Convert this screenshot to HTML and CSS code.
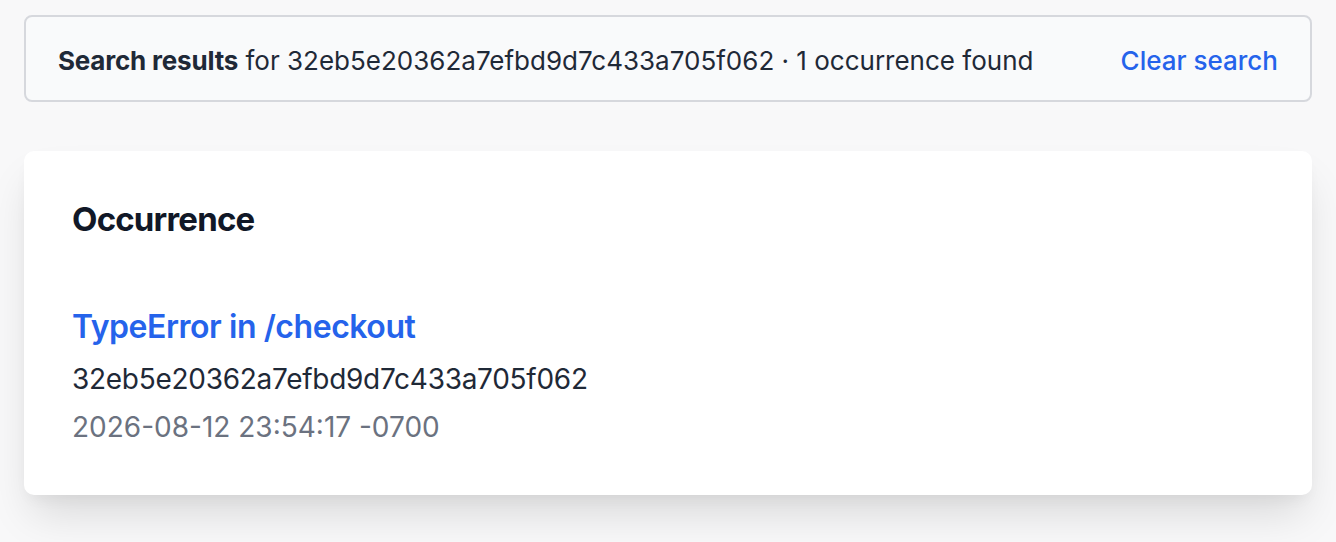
FILE: index.html
```html
<!DOCTYPE html>
<html lang="en">
<head>
<meta charset="utf-8">
<title>Search results</title>
<link rel="stylesheet" href="styles.css">
</head>
<body>
<main class="page">
  <div class="banner">
    <p class="banner-text"><strong>Search results</strong> for 32eb5e20362a7efbd9d7c433a705f062 · 1 occurrence found</p>
    <a class="banner-link" href="#">Clear search</a>
  </div>
  <section class="card">
    <h2 class="card-title">Occurrence</h2>
    <div class="occurrence">
      <a class="occ-title" href="#">TypeError in /checkout</a>
      <div class="occ-id">32eb5e20362a7efbd9d7c433a705f062</div>
      <div class="occ-date">2026-08-12 23:54:17 -0700</div>
    </div>
  </section>
</main>
</body>
</html>
```

FILE: styles.css
```css
* { box-sizing: border-box; }
html, body {
  margin: 0;
  padding: 0;
  background: #f8f8f9;
  font-family: Inter, "Noto Sans", "Liberation Sans", sans-serif;
}
body { min-height: 100vh; }
.page {
  padding: 15px 24px 64px;
  display: flex;
  flex-direction: column;
  gap: 49px;
}
.banner {
  display: flex;
  align-items: center;
  justify-content: space-between;
  gap: 24px;
  background: #f9fafb;
  border: 2px solid #d6d8dd;
  border-radius: 8px;
  padding: 24px 32px 19px;
}
.banner-text {
  margin: 0;
  font-size: 26px;
  line-height: 40px;
  color: #1f2937;
  white-space: nowrap;
}
.banner-text strong { font-weight: 700; letter-spacing: -0.2px; }
.banner-link {
  font-size: 26px;
  line-height: 40px;
  font-weight: 500;
  color: #2563eb;
  text-decoration: none;
  white-space: nowrap;
}
.card {
  background: #ffffff;
  border-radius: 10px;
  padding: 48px;
  box-shadow: 0 26px 44px -8px rgba(0, 0, 0, 0.13), 0 8px 16px -6px rgba(0, 0, 0, 0.06);
}
.card-title {
  margin: 0 0 64px;
  font-size: 33px;
  line-height: 40px;
  font-weight: 700;
  letter-spacing: -0.8px;
  color: #111827;
}
.occurrence {
  display: flex;
  flex-direction: column;
  gap: 8px;
}
.occ-title {
  font-size: 32px;
  line-height: 48px;
  font-weight: 600;
  letter-spacing: -0.45px;
  color: #2563eb;
  text-decoration: none;
}
.occ-id {
  font-size: 28px;
  line-height: 40px;
  letter-spacing: -0.28px;
  color: #1f2937;
}
.occ-date {
  font-size: 28px;
  line-height: 40px;
  color: #6b7280;
}
```
